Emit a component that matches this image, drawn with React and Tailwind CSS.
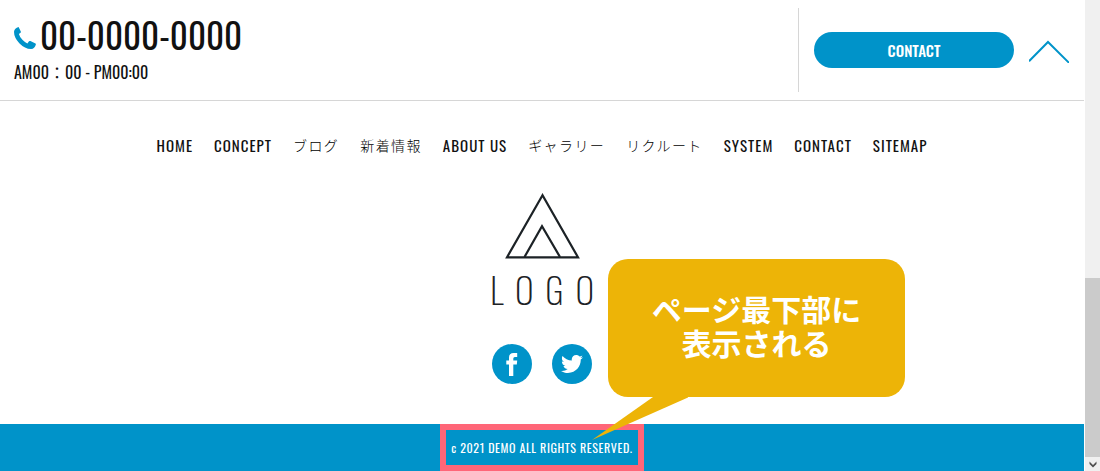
import React from "react";
import { FaTwitter } from "react-icons/fa";

const navItems = [
  { label: "HOME", href: "#home" },
  { label: "CONCEPT", href: "#concept" },
  { label: "ブログ", href: "#blog", ja: true },
  { label: "新着情報", href: "#news", ja: true },
  { label: "ABOUT US", href: "#about" },
  { label: "ギャラリー", href: "#gallery", ja: true },
  { label: "リクルート", href: "#recruit", ja: true },
  { label: "SYSTEM", href: "#system" },
  { label: "CONTACT", href: "#contact" },
  { label: "SITEMAP", href: "#sitemap" },
];

function Header() {
  return (
    <header className="flex items-start justify-between border-b border-[#d6d6d6] py-2 pl-3.5 pr-[15px]">
      <div>
        <a href="tel:00-0000-0000" className="flex items-center gap-1 text-[35px] leading-[52px]">
          <svg width="22" height="22" viewBox="0 -4 22 22" fill="#0093c9" overflow="visible" aria-hidden="true">
            <path d="M4.6 0.1 6.8 4.4Q7.2 5.2 6.5 5.7L4.9 7Q5.6 9.8 8.4 12.8 11.2 15.7 13.4 16.4L15 14.3Q15.6 13.7 16.4 14L21.5 16.5Q22.1 16.9 21.8 17.7 20.6 21.7 17.2 22 11 22.1 5.3 16.2 0 10.5 0 4.7 0.5 1.3 4.6 0.1Z" />
          </svg>
          00-0000-0000
        </a>
        <p className="text-base leading-6">AM00：00 - PM00:00</p>
      </div>
      <div className="flex h-[84px] items-center gap-[15px] border-l border-[#d6d6d6] pl-[15px]">
        <a
          href="#contact"
          className="flex h-9 w-[200px] items-center justify-center rounded-full bg-[#0093c9] text-[15px] font-medium text-white"
        >
          CONTACT
        </a>
        <button type="button" aria-label="Back to top">
          <svg width="40" height="26" viewBox="0 0 40 26" fill="none" stroke="#0093c9" strokeWidth="2">
            <path d="M0 24.2 19 5 40 25.8" />
          </svg>
        </button>
      </div>
    </header>
  );
}

function Logo() {
  return (
    <a href="#home" className="mt-9 flex flex-col items-center">
      <svg width="76" height="66" viewBox="0 0 76 66" fill="none" stroke="#1c2226" strokeWidth="2.2" aria-hidden="true">
        <path d="M38.5 2.2 3 64.3H74Z" />
        <path d="M20.5 64 38 33.2 56 64" />
      </svg>
      <span className="mt-2 flex w-[104px] justify-between text-4xl font-extralight leading-[44px] text-[#1c2226]">
        <span>L</span>
        <span>O</span>
        <span>G</span>
        <span>O</span>
      </span>
    </a>
  );
}

function Callout() {
  return (
    <div className="absolute bottom-[27px] left-1/2 ml-[66px] w-[297px]">
      <p className="rounded-[20px] bg-[#edb407] pb-[38px] pt-8 text-center font-['Noto_Sans_CJK_JP',sans-serif] text-[30px] font-bold leading-[34px] text-white">
        ページ最下部に
        <br />
        表示される
      </p>
      <svg
        className="absolute -left-4 top-full"
        width="96"
        height="44"
        viewBox="0 0 96 44"
        fill="#edb407"
        aria-hidden="true"
      >
        <path d="M61 0H97L0 43Z" />
      </svg>
    </div>
  );
}

function Scrollbar() {
  return (
    <div className="flex w-[15px] shrink-0 flex-col bg-[#f0f0f0]">
      <div className="flex-1" />
      <div className="h-[179px] bg-[#cbcbcb]" />
      <div className="flex h-3.5 items-center justify-center">
        <svg width="8" height="6" viewBox="0 0 8 6" fill="#505050" overflow="visible" aria-hidden="true">
          <path d="M0.5 0.5 4 4 7.5 0.5V3L4 6.5 0.5 3Z" />
        </svg>
      </div>
    </div>
  );
}

export default function App() {
  return (
    <div className="flex min-h-screen bg-white font-['Oswald','Noto_Sans_CJK_JP',sans-serif] text-[#111]">
      <div className="mr-px flex min-w-0 flex-1 flex-col">
        <Header />

        <main className="relative flex flex-1 flex-col items-center pt-8">
          <nav>
            <ul className="flex flex-wrap justify-center gap-x-[21px]">
              {navItems.map((item) => (
                <li key={item.label}>
                  <a
                    href={item.href}
                    className={
                      item.ja
                        ? "block text-sm leading-6 font-light tracking-widest text-black"
                        : "block text-[15px] leading-6 tracking-[1px]"
                    }
                  >
                    {item.label}
                  </a>
                </li>
              ))}
            </ul>
          </nav>

          <Logo />

          <div className="mb-10 mt-auto flex gap-5">
            <a
              href="#facebook"
              aria-label="Facebook"
              className="flex size-10 items-center justify-center rounded-full bg-[#0093c9]"
            >
              <svg width="12" height="24" viewBox="0 0 12 24" fill="#fff" aria-hidden="true">
                <path d="M3 24V12.6H0.3V8.6H3V5.6Q3 1 7.6 1H11.2V5H8.8Q7.3 5 7.3 6.6V8.6H11.2L10.8 12.6H7.3V24Z" />
              </svg>
            </a>
            <a
              href="#twitter"
              aria-label="Twitter"
              className="flex size-10 items-center justify-center rounded-full bg-[#0093c9] text-white"
            >
              <FaTwitter size={22} />
            </a>
          </div>

          <Callout />
        </main>

        <footer className="flex justify-center bg-[#0093c9]">
          <p className="border-[6px] border-[#ff6678] px-[5px] text-xs leading-[35px] tracking-wider text-white">
            c 2021 DEMO ALL RIGHTS RESERVED.
          </p>
        </footer>
      </div>
      <Scrollbar />
    </div>
  );
}
